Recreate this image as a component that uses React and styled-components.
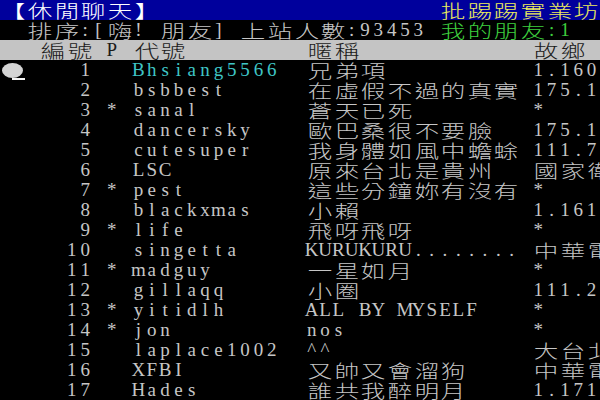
import React from 'react'
import styled, { createGlobalStyle } from 'styled-components'

// one terminal column, in px (45 columns fill the 600px window)
const CW = 600 / 45

const GlobalStyle = createGlobalStyle`
  html, body {
    margin: 0;
    padding: 0;
    background: #000;
  }
  body {
    width: 600px;
    height: 400px;
    overflow: hidden;
  }
`

const Terminal = styled.div`
  width: 600px;
  height: 400px;
  overflow: hidden;
  background: #000;
  display: flex;
  flex-direction: column;
`

const Line = styled.div`
  flex: none;
  display: flex;
  height: 20px;
  line-height: 20px;
  white-space: pre;
  overflow: hidden;
  background: ${props => props.$bg || 'transparent'};
  color: ${props => props.$fg || '#c6c6c6'};
`

const Cell = styled.span`
  flex: none;
  box-sizing: border-box;
  display: flex;
  justify-content: center;
  width: ${props => (props.$wide ? CW * 2 : CW)}px;
  padding-right: ${props => (props.$wide ? 0 : 3)}px;
  height: 20px;
  color: ${props => props.$fg || 'inherit'};
  font-family: ${props =>
    props.$wide
      ? '"Noto Sans CJK TC", "Noto Sans CJK SC", sans-serif'
      : '"Liberation Serif", "Times New Roman", serif'};
  font-size: ${props => (props.$wide ? 18 : 19)}px;
  font-weight: ${props => (props.$wide ? 300 : 400)};
`

// full-width glyphs are stretched to fill their two columns
const WideGlyph = styled.span`
  display: inline-block;
  transform: scaleX(1.36);
`

const CursorCell = styled.span`
  flex: none;
  position: relative;
  width: ${CW * 2}px;
  height: 20px;
  display: flex;
  align-items: center;

  &::after {
    content: '';
    position: absolute;
    left: 12px;
    top: 18px;
    width: 13px;
    height: 2px;
    background: #f4f4f4;
  }
`

const Dot = styled.span`
  margin-left: 2px;
  width: 21px;
  height: 15px;
  border-radius: 50%;
  background: #d4d4d4;
`

const isWide = ch => {
  const c = ch.codePointAt(0)
  return c >= 0x2e80 && c !== 0xff61
}

const width = s => [...s].reduce((n, ch) => n + (isWide(ch) ? 2 : 1), 0)
const pad = (s, cols) => s + ' '.repeat(Math.max(0, cols - width(s)))

function Text({ children, fg }) {
  return [...children].map((ch, i) => {
    const wide = isWide(ch)
    return (
      <Cell key={i} $wide={wide} $fg={fg}>
        {wide ? <WideGlyph>{ch}</WideGlyph> : ch === ' ' ? '\u00a0' : ch}
      </Cell>
    )
  })
}

const users = [
  { id: 'Bhsiang5566', nick: '兄弟項', from: '1.160.33.21', fg: '#3fc6c6' },
  { id: 'bsbbest', nick: '在虛假不過的真實', from: '175.182.1.5' },
  { id: 'sanal', star: true, nick: '蒼天已死', from: '*' },
  { id: 'dancersky', nick: '歐巴桑很不要臉', from: '175.180.2.9' },
  { id: 'cutesuper', nick: '我身體如風中蟾蜍', from: '111.76.3.2' },
  { id: 'LSC', nick: '原來台北是貴州', from: '國家衛生研究院' },
  { id: 'pest', star: true, nick: '這些分鐘妳有沒有', from: '*' },
  { id: 'blackxmas', nick: '小賴', from: '1.161.40.8' },
  { id: 'life', star: true, nick: '飛呀飛呀', from: '*' },
  { id: 'singetta', nick: 'KURUKURU........', from: '中華電信' },
  { id: 'madguy', star: true, nick: '一星如月', from: '*' },
  { id: 'gillaqq', nick: '小圈', from: '111.24.9.1' },
  { id: 'yitidlh', star: true, nick: 'ALL BY MYSELF', from: '*' },
  { id: 'jon', star: true, nick: 'nos', from: '*' },
  { id: 'laplace1002', nick: '^^', from: '大台北寬頻' },
  { id: 'XFBI', nick: '又帥又會溜狗', from: '中華電信' },
  { id: 'Hades', nick: '誰共我醉明月', from: '1.171.2.60' },
]

export default function App() {
  return (
    <>
      <GlobalStyle />
      <Terminal>
        <Line $bg="#00009c" $fg="#ffffff">
          <Text>{pad('【休閒聊天】', 33)}</Text>
          <Text fg="#ecec5c">批踢踢實業坊</Text>
        </Line>
        <Line>
          <Text>{'  排序:[嗨! 朋友] 上站人數:93453 '}</Text>
          <Text fg="#3ecf3e">我的朋友:1</Text>
        </Line>
        <Line $bg="#c4c4c4" $fg="#1a1a1a">
          <Text>{pad('   編號 P 代號', 23) + pad('暱稱', 17) + '故鄉'}</Text>
        </Line>
        {users.map((u, i) => (
          <Line key={u.id}>
            {i === 0 ? (
              <CursorCell>
                <Dot />
              </CursorCell>
            ) : (
              <Text>{'  '}</Text>
            )}
            <Text>{String(i + 1).padStart(5) + ' ' + (u.star ? '*' : ' ') + ' '}</Text>
            <Text fg={u.fg}>{pad(u.id, 13)}</Text>
            <Text>{pad(u.nick, 17)}</Text>
            <Text>{u.from}</Text>
          </Line>
        ))}
      </Terminal>
    </>
  )
}
